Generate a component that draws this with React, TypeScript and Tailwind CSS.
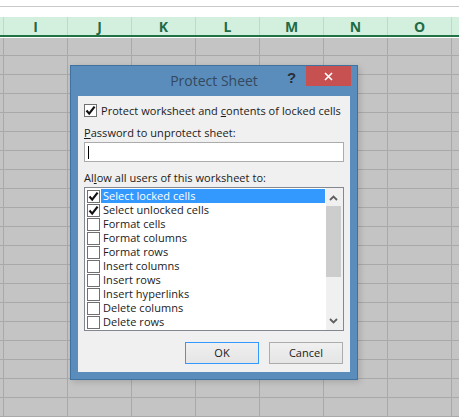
const columns = ['I', 'J', 'K', 'L', 'M', 'N', 'O'];
const permissions = [
  'Select locked cells',
  'Select unlocked cells',
  'Format cells',
  'Format columns',
  'Format rows',
  'Insert columns',
  'Insert rows',
  'Insert hyperlinks',
  'Delete columns',
  'Delete rows',
];

function Tick() {
  return (
    <svg width="11" height="11" viewBox="0 0 11 11">
      <path d="M1.5 5.5 L4.2 8.6 L9.6 1.6" fill="none" stroke="#111" strokeWidth="2.2" />
    </svg>
  );
}

function Checkbox({ checked }: { checked: boolean }) {
  return (
    <div className="w-[13px] h-[13px] shrink-0 border border-[#707070] bg-white flex items-center justify-center">
      {checked && <Tick />}
    </div>
  );
}

function SheetRow({ first }: { first?: boolean }) {
  return (
    <div className={`flex border-b border-[#a9a9a9] ${first ? 'h-[18px]' : 'h-[19px]'}`}>
      <div className="w-[4px] border-r border-[#a9a9a9]" />
      {columns.map((c) => (
        <div key={c} className="w-16 shrink-0 border-r border-[#a9a9a9]" />
      ))}
    </div>
  );
}

export default function App() {
  return (
    <div className="relative w-[459px] h-[417px] overflow-hidden bg-white font-['Open_Sans','Liberation_Sans',sans-serif] text-[11px] tracking-[0.04px] text-[#1a1a1a]">
      <div className="h-[17px] pt-[6px]">
        <div className="h-px bg-[#c8c8c8]" />
      </div>

      <div className="flex h-[18px] bg-[#d3f0df]">
        <div className="w-[4px] border-r border-[#c6d6cc]" />
        {columns.map((c) => (
          <div
            key={c}
            className="w-16 shrink-0 border-r border-[#c6d6cc] flex items-center justify-center text-[14px] font-bold text-[#1f6b45]"
          >
            {c}
          </div>
        ))}
      </div>
      <div className="h-[2px] bg-[#217346]" />
      <div className="h-px bg-white" />

      <div className="bg-[#c4c4c4] h-[379px] overflow-hidden">
        <SheetRow first />
        {Array.from({ length: 19 }).map((_, i) => (
          <SheetRow key={i} />
        ))}
      </div>

      <div className="absolute left-[70px] top-[65px] w-[288px] h-[315px] bg-[#5a8dbc] border border-[#40719f] shadow-[2px_2px_6px_rgba(0,0,0,0.15)] flex flex-col">
        <div className="h-[30px] shrink-0 flex items-center justify-center pb-[1px]">
          <span className="text-[14px] tracking-normal text-[#34495e]">Protect Sheet</span>
        </div>
        <div className="absolute left-[216px] top-[1px] text-[15px] font-bold text-[#2a2f36] font-['Liberation_Sans',sans-serif]">?</div>
        <div className="absolute left-[235px] top-0 w-[45px] h-[20px] bg-[#c75050] flex items-center justify-center">
          <svg width="9" height="9" viewBox="0 0 9 9">
            <path d="M1 1 L8 8 M8 1 L1 8" stroke="#fff" strokeWidth="1.6" />
          </svg>
        </div>

        <div className="mx-[7px] h-[276px] bg-[#f0f0f0] pl-[6px] pr-[6px] pt-[8px] flex flex-col">
          <div className="flex items-center gap-[4px] h-[13px]">
            <Checkbox checked />
            <span className="relative top-px">
              Protect worksheet and <span className="underline">c</span>ontents of locked cells
            </span>
          </div>
          <div className="mt-[9px] h-[14px] leading-[14px]">
            <span className="underline">P</span>assword to unprotect sheet:
          </div>
          <div className="mt-[2px] h-[20px] w-[260px] border border-[#ababab] bg-white flex items-center pl-[3px]">
            <div className="w-px h-[13px] bg-black" />
          </div>
          <div className="mt-[9px] h-[14px] leading-[14px]">
            Al<span className="underline">l</span>ow all users of this worksheet to:
          </div>
          <div className="mt-[2px] w-[260px] h-[144px] border border-[#828790] bg-white flex">
            <div className="flex-1 pt-[1px] pl-[2px] flex flex-col">
              {permissions.map((p, i) => (
                <div key={p} className="flex items-center h-[14px] gap-px">
                  <Checkbox checked={i < 2} />
                  <span
                    className={
                      i === 0
                        ? 'w-[224px] h-[14px] pl-[2px] leading-[14px] bg-[#3399ff] text-white'
                        : 'h-[14px] pl-[2px] leading-[14px]'
                    }
                  >
                    {p}
                  </span>
                </div>
              ))}
            </div>
            <div className="w-[17px] bg-[#f0f0f0] flex flex-col items-start">
              <svg width="9" height="6" viewBox="0 0 9 6" className="mt-[7px] ml-[3px]">
                <path d="M1 5 L4.5 1.5 L8 5" fill="none" stroke="#606060" strokeWidth="1.8" />
              </svg>
              <div className="mt-[5px] w-[15px] h-[71px] bg-[#cdcdcd]" />
              <svg width="9" height="6" viewBox="0 0 9 6" className="mt-[41px] ml-[3px]">
                <path d="M1 1 L4.5 4.5 L8 1" fill="none" stroke="#606060" strokeWidth="1.8" />
              </svg>
            </div>
          </div>
          <div className="mt-[11px] flex justify-end gap-[10px] w-[259px]">
            <button className="w-[74px] h-[22px] border border-[#3399ff] bg-gradient-to-b from-[#f0f0f0] to-[#e5e5e5]">
              OK
            </button>
            <button className="w-[74px] h-[22px] border border-[#acacac] bg-gradient-to-b from-[#f0f0f0] to-[#e5e5e5]">
              Cancel
            </button>
          </div>
        </div>
      </div>
    </div>
  );
}
